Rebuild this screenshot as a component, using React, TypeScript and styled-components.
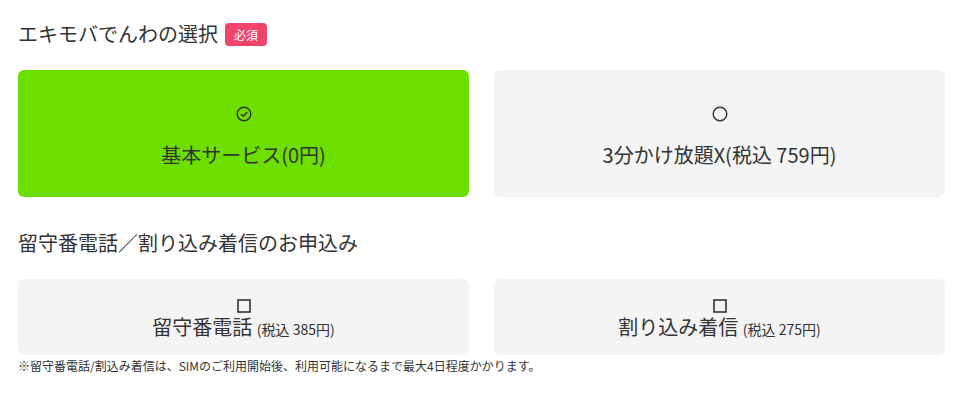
import styled, { createGlobalStyle } from 'styled-components';
import { useState } from 'react';

const GlobalStyle = createGlobalStyle`
  body {
    margin: 0;
    background: #fff;
    font-family: 'Noto Sans CJK JP', 'Noto Sans', sans-serif;
    color: #333;
  }
`;

const Page = styled.div`
  width: 927px;
  padding: 0 18px;
`;

const Heading = styled.h2`
  display: flex;
  align-items: center;
  gap: 7px;
  margin: 0;
  font-size: 20px;
  font-weight: 400;
  color: #333;
  line-height: 28px;
`;

const Badge = styled.span`
  display: inline-block;
  background: #ef456b;
  color: #fff;
  font-size: 12px;
  line-height: 23px;
  height: 23px;
  padding: 0 9px;
  border-radius: 4px;
`;

const Grid = styled.div<{ $h: number }>`
  display: grid;
  grid-template-columns: 1fr 1fr;
  gap: 25px;
  margin-top: 22px;
  & > * {
    height: ${(p) => p.$h}px;
  }
`;

const Card = styled.button<{ $on?: boolean; $pt?: number }>`
  display: flex;
  flex-direction: column;
  align-items: center;
  justify-content: center;
  border: 0;
  border-radius: 6px;
  background: ${(p) => (p.$on ? '#6ddf00' : '#f4f4f4')};
  color: #333;
  font-family: inherit;
  cursor: pointer;
  padding: ${(p) => p.$pt ?? 0}px 0 0;
`;

const Label = styled.span`
  font-size: 20px;
  line-height: 26px;
`;

const Small = styled.span`
  font-size: 14px;
`;

const Section = styled.section`
  padding-top: 20px;
`;

const Section2 = styled.section`
  padding-top: 32px;
`;

const Note = styled.p`
  margin: 3px 0 0;
  font-size: 12px;
  line-height: 16px;
  color: #333;
`;

const RadioIcon = ({ on }: { on: boolean }) => (
  <svg width="16" height="16" viewBox="0 0 16 16" style={{ marginBottom: 20 }}>
    <circle cx="8" cy="8" r="6.8" fill="none" stroke="#333" strokeWidth="1.4" />
    {on && <path d="M5 8.2l2.1 2.1L11.2 6" fill="none" stroke="#333" strokeWidth="1.5" />}
  </svg>
);

const BoxIcon = () => (
  <svg width="14" height="14" viewBox="0 0 14 14" style={{ marginTop: 4, marginBottom: 1 }}>
    <rect x="1" y="1" width="12" height="12" fill="none" stroke="#333" strokeWidth="1.6" />
  </svg>
);

export default function App() {
  const [plan, setPlan] = useState(0);
  return (
    <Page>
      <GlobalStyle />
      <Section>
        <Heading>
          エキモバでんわの選択<Badge>必須</Badge>
        </Heading>
        <Grid $h={127}>
          <Card $pt={6} $on={plan === 0} onClick={() => setPlan(0)}>
            <RadioIcon on={plan === 0} />
            <Label>基本サービス(0円)</Label>
          </Card>
          <Card $pt={6} $on={plan === 1} onClick={() => setPlan(1)}>
            <RadioIcon on={plan === 1} />
            <Label>3分かけ放題X(税込 759円)</Label>
          </Card>
        </Grid>
      </Section>
      <Section2>
        <Heading>留守番電話／割り込み着信のお申込み</Heading>
        <Grid $h={76}>
          <Card $pt={2}>
            <BoxIcon />
            <Label>
              留守番電話 <Small>(税込 385円)</Small>
            </Label>
          </Card>
          <Card $pt={2}>
            <BoxIcon />
            <Label>
              割り込み着信 <Small>(税込 275円)</Small>
            </Label>
          </Card>
        </Grid>
        <Note>※留守番電話/割込み着信は、SIMのご利用開始後、利用可能になるまで最大4日程度かかります。</Note>
      </Section2>
    </Page>
  );
}
